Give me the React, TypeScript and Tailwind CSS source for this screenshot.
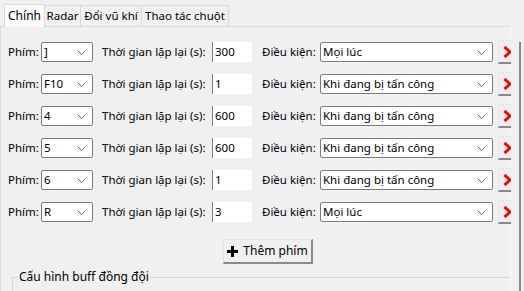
import React from "react";

const rows = [
  { key: "]", time: "300", cond: "Mọi lúc" },
  { key: "F10", time: "1", cond: "Khi đang bị tấn công" },
  { key: "4", time: "600", cond: "Khi đang bị tấn công" },
  { key: "5", time: "600", cond: "Khi đang bị tấn công" },
  { key: "6", time: "1", cond: "Khi đang bị tấn công" },
  { key: "R", time: "3", cond: "Mọi lúc" },
];

function Chevron() {
  return (
    <svg width="9" height="5" viewBox="0 0 9 5" className="shrink-0">
      <polyline points="0.5,0.5 4.5,4.5 8.5,0.5" fill="none" stroke="#606060" strokeWidth="1" />
    </svg>
  );
}

function Combo({ value, w }: { value: string; w: string }) {
  return (
    <div className={`${w} h-[20px] bg-white border border-[#7a7a7a] rounded-[2px] flex items-center pl-[2px] pr-[6px] shrink-0`}>
      <span className="flex-1 text-black leading-none">{value}</span>
      <Chevron />
    </div>
  );
}

function Tab({ label, w, active }: { label: string; w: string; active?: boolean }) {
  return active ? (
    <div className={`${w} h-[23px] bg-[#fbfbfb] border border-b-0 border-[#d9d9d9] flex items-center justify-center relative top-[1px] z-10 text-[12px]`}>
      {label}
    </div>
  ) : (
    <div className={`${w} h-[21px] bg-[#f0f0f0] border border-b-0 border-l-0 border-[#d9d9d9] flex items-center justify-center`}>
      {label}
    </div>
  );
}

export default function App() {
  return (
    <div
      className="w-[524px] h-[291px] bg-[#f0f0f0] overflow-hidden flex text-[11.5px] text-black"
      style={{ fontFamily: '"Noto Sans", "Open Sans", sans-serif' }}
    >
      <div className="w-[511px] shrink-0 flex flex-col overflow-hidden">
        <div className="h-[26px] flex items-end pl-[4px]">
          <Tab label="Chính" w="w-[41px]" active />
          <Tab label="Radar" w="w-[36px]" />
          <Tab label="Đổi vũ khí" w="w-[61px]" />
          <Tab label="Thao tác chuột" w="w-[87px]" />
        </div>
        <div className="flex-1 border-t border-l border-r border-[#dadada] border-r-[#fafafa] flex flex-col pt-[15px]">
          <div className="flex flex-col gap-[12px]">
            {rows.map((r, i) => (
              <div key={i} className="flex items-center h-[20px] pl-[7px]">
                <span className="w-[33px] shrink-0">Phím:</span>
                <Combo value={r.key} w="w-[52px]" />
                <span className="w-[110px] ml-[9px] shrink-0 whitespace-nowrap">Thời gian lặp lại (s):</span>
                <div className="w-[40px] h-[20px] bg-white border-l border-[#7a7a7a] flex items-center pl-[2px] shrink-0">
                  {r.time}
                </div>
                <span className="w-[58px] ml-[10px] shrink-0 whitespace-nowrap">Điều kiện:</span>
                <Combo value={r.cond} w="w-[173px]" />
                <div className="ml-[5px] w-[24px] h-[24px] shrink-0 bg-[#efefef] border-t border-l border-[#e8e8e8] border-b-2 border-b-[#8a8a8a] border-r-2 border-r-[#8a8a8a] flex items-center pl-[4px]">
                  <svg width="9" height="12" viewBox="0 0 9 12">
                    <polyline points="1.5,1 7,6 1.5,11" fill="none" stroke="#ff0000" strokeWidth="3" />
                  </svg>
                </div>
              </div>
            ))}
          </div>
          <div className="mt-[17px] ml-[222px] w-[90px] h-[25px] bg-[#f0f0f0] border-t border-l border-[#e3e3e3] border-r-2 border-b-2 border-r-[#8a8a8a] border-b-[#8a8a8a] flex items-center justify-center gap-[5px] text-[12px]">
            <svg width="11" height="11" viewBox="0 0 11 11">
              <rect x="4" y="0" width="3" height="11" fill="#000" />
              <rect x="0" y="4" width="11" height="3" fill="#000" />
            </svg>
            <span>Thêm phím</span>
          </div>
          <div className="mt-[13px] ml-[11px] flex-1 border-t border-l border-[#d5d5d5] relative">
            <span className="absolute -top-[9px] left-[5px] bg-[#f0f0f0] px-[1px] leading-[16px] text-[12px]">Cấu hình buff đồng đội</span>
          </div>
        </div>
      </div>
      <div className="flex-1 flex">
        <div className="ml-[8px] mt-[42px] w-[2px] bg-[#8a8a8a]" />
      </div>
    </div>
  );
}
